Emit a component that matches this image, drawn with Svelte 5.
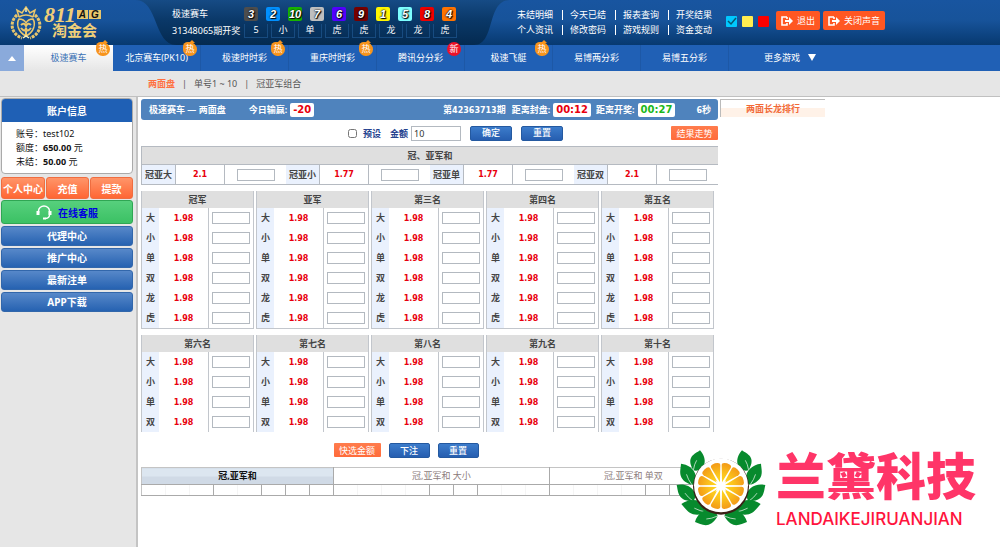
<script>
  const balls = [
    [3, '#4d4d4d'], [2, '#0090ff'], [10, '#18b400'], [7, '#bfbfbf'], [6, '#5200ff'],
    [9, '#760000'], [1, '#fff600'], [5, '#7dffff'], [8, '#f00000'], [4, '#ff7300']
  ];
  const results = ['5', '小', '单', '虎', '虎', '龙', '龙', '虎'];
  const links = [
    ['未结明细', '今天已结', '报表查询', '开奖结果'],
    ['个人资讯', '修改密码', '游戏规则', '资金变动']
  ];
  const games = [
    ['极速赛车', '热'], ['北京赛车(PK10)', '热'], ['极速时时彩', '热'], ['重庆时时彩', '热'],
    ['腾讯分分彩', '新'], ['极速飞艇', '热'], ['易博两分彩', ''], ['易博五分彩', '']
  ];
  const sums = [['冠亚大', '2.1'], ['冠亚小', '1.77'], ['冠亚单', '1.77'], ['冠亚双', '2.1']];
  const groups = [
    { names: ['冠军', '亚军', '第三名', '第四名', '第五名'], picks: ['大', '小', '单', '双', '龙', '虎'] },
    { names: ['第六名', '第七名', '第八名', '第九名', '第十名'], picks: ['大', '小', '单', '双'] }
  ];
  const menu = ['代理中心', '推广中心', '最新注单', 'APP下载'];
  const trendCells = Array.from({ length: 24 }, (_, i) => i + 1);
  const ruled = [3, 5, 6, 7, 8, 12, 13, 14, 17, 21, 22, 24];

  const leafEnds = [
    [104, 54, 84, 114, 22], [47, 94, 80, 158, 21], [34, 158, 84, 207, 21],
    [48, 215, 126, 240, 22], [89, 269, 157, 251, 22]
  ];
  const leaves = leafEnds.flatMap((e) => [e, [334 - e[0], e[1], 334 - e[2], e[3], -e[4]]]).map(([x, y, a, b, w]) => {
    const len = Math.hypot(a - x, b - y);
    const ux = (a - x) / len, uy = (b - y) / len;
    const at = (t, s) => `${(x + ux * len * t - uy * w * s).toFixed(1)} ${(y + uy * len * t + ux * w * s).toFixed(1)}`;
    return {
      body: `M${at(0, 0)}C${at(0.25, 0.5)} ${at(0.5, 1.6)} ${at(1, 0)}C${at(0.95, -1.5)} ${at(0.3, -1.6)} ${at(0, 0)}Z`,
      vein: `M${at(0.5, 0)}Q${at(0.7, 0.15)} ${at(1, 0)}`
    };
  });
  const slices = Array.from({ length: 12 }, (_, i) => i * 30);
  let preset = $state(false);
  let amount = $state('10');
</script>

<header>
  <a class="brand" href="#home" aria-label="811AG 淘金会">
    <svg width="32" height="34" viewBox="0 0 32 34" fill="none" stroke="#e9c66c" stroke-width="1.5">
      <path d="M9 11 7 4l5 3 4-6 4 6 5-3-2 7M9 11q7-4 14 0" />
      <path d="M7 9C-1 16 1 28 12 32M25 9c8 7 6 19-5 23" stroke-width="3" stroke-dasharray="3 1" />
      <path d="M9 13q5 0 7 4 2-4 7-4c3 5 1 13-7 17-8-4-10-12-7-17z" fill="#17539a" />
      <path d="M11 19q3-3 5 1 2-4 5-1M11 22q4 5 5 0 1 5 5 0M16 25v4" stroke-width="2" />
      <path d="m13 32 3-2 3 2M16 2v4" stroke="#fff3b6" />
    </svg>
    <span class="name"><span class="num"><b>811</b><i>A</i><i>G</i></span><strong>淘金会</strong></span>
  </a>
  <section class="draw">
    <svg class="curve" viewBox="0 0 360 45" preserveAspectRatio="none">
      <defs><linearGradient id="deep" x2="0" y2="1"><stop stop-color="#164b85" /><stop offset=".45" stop-color="#0a3868" /><stop offset="1" stop-color="#042a50" /></linearGradient></defs>
      <path d="M-4 0C18 0 14 45 36 45H334C356 45 346 0 370 0Z" fill="url(#deep)" />
    </svg>
    <div class="period"><span>极速赛车</span><span>31348065期开奖</span></div>
    <div class="outcome">
      <div class="balls">{#each balls as [n, c]}<b style:background={c}>{n}</b>{/each}</div>
      <div class="marks">{#each results as r}<span>{r}</span>{/each}</div>
    </div>
  </section>
  <div class="links">
    {#each links as row}<div>{#each row as l}<a href="#info">{l}</a>{/each}</div>{/each}
  </div>
  <div class="skins">
    <button class="cyan" aria-label="蓝色"><svg viewBox="0 0 11 11"><path d="m2 5 3 3 5-6" fill="none" stroke="#075775" stroke-width="1.5" /></svg></button>
    <button class="yellow" aria-label="黄色"></button>
    <button class="red" aria-label="红色"></button>
  </div>
  {#each ['退出', '关闭声音'] as t}
    <button class="exit"><svg width="12" height="10" viewBox="0 0 12 10"><path d="M6 1H1v8h5V7M6 1v2" fill="none" stroke="#fff" stroke-width="1.6" /><path d="M4 4h4V1l4 4-4 4V6H4z" fill="#fff" /></svg>{t}</button>
  {/each}
</header>

<nav class="games">
  <button class="fold" aria-label="收起"><svg width="8" height="5" viewBox="0 0 8 5"><path d="m0 5 4-5 4 5z" fill="#fff" /></svg></button>
  {#each games as [name, tag], i}
    <a href="#game" class:active={i === 0}>{name}{#if tag}<em class:fresh={tag === '新'}>{tag}</em>{/if}</a>
  {/each}
  <a href="#more" class="more">更多游戏<svg width="8" height="7" viewBox="0 0 8 7"><path d="M0 0h8L4 7z" fill="#fff" /></svg></a>
</nav>
<nav class="modes"><a class="on" href="#two">两面盘</a><span>|</span><a href="#single">单号1 ~ 10</a><span>|</span><a href="#group">冠亚军组合</a></nav>

<div class="page">
  <aside>
    <section class="account">
      <h2>账户信息</h2>
      <p>账号：<span>test102</span></p>
      <p>额度：<b>650.00</b> 元</p>
      <p>未结：<b>50.00</b> 元</p>
    </section>
    <div class="trio"><button>个人中心</button><button>充值</button><button>提款</button></div>
    <a class="service" href="#service">
      <svg width="16" height="15" viewBox="0 0 16 15" fill="none" stroke="#fff"><path d="M2.500 8V6a5.500 5 0 0 1 11 0v4q0 3-4 3.500" stroke-width="1.4" /><path d="M2 6v4M14 6v4" stroke-width="3" /><path d="M7 13.500h3" stroke-width="2" /></svg>
      在线客服
    </a>
    {#each menu as m}<button class="entry">{m}</button>{/each}
  </aside>

  <main>
    <div class="status">
      <span class="title">极速赛车 — 两面盘</span>
      <span class="tag">今日输赢:</span><output class="balance">-20</output>
      <span class="issue">第<small>42363713</small>期</span>
      <span class="tag">距离封盘:</span><output class="clock">00:12</output>
      <span class="tag">距离开奖:</span><output class="clock go">00:27</output>
      <span class="sec"><small>6</small>秒</span>
    </div>
    <form class="quick" onsubmit={(e) => e.preventDefault()}>
      <input id="preset" type="checkbox" bind:checked={preset} /><label for="preset">预设</label>
      <label for="amount">金额</label><input id="amount" type="text" bind:value={amount} />
      <button class="blue">确定</button><button class="blue" type="reset">重置</button>
      <button class="orange" type="button">结果走势</button>
    </form>

    <table class="sum">
      <thead><tr><th colspan="12">冠、亚军和</th></tr></thead>
      <tbody><tr>
        {#each sums as [n, o]}<th>{n}</th><td class="odds">{o}</td><td class="bet"><input type="text" aria-label={n} /></td>{/each}
      </tr></tbody>
    </table>

    {#each groups as g}
      <div class="group">
        {#each g.names as name}
          <table class:open={g.picks.length === 4}>
            <thead><tr><th colspan="3">{name}</th></tr></thead>
            <tbody>
              {#each g.picks as p}
                <tr><th>{p}</th><td class="odds">1.98</td><td class="bet"><input type="text" aria-label="{name}{p}" /></td></tr>
              {/each}
            </tbody>
          </table>
        {/each}
      </div>
    {/each}

    <div class="actions"><button class="orange">快选金额</button><button class="blue">下注</button><button class="blue">重置</button></div>

    <table class="trend">
      <thead><tr><th colspan="8" class="current">冠,亚军和</th><th colspan="9">冠,亚军和 大小</th><th colspan="7">冠,亚军和 单双</th></tr></thead>
      <tbody><tr>{#each trendCells as c}<td class:rule={ruled.includes(c)}></td>{/each}</tr></tbody>
    </table>
  </main>

  <section class="streak"><h2>两面长龙排行</h2></section>

  <div class="company">
    <svg width="90" height="80" viewBox="32 50 270 240">
      <defs><radialGradient id="juice" cx="167" cy="161" r="70" gradientUnits="userSpaceOnUse"><stop stop-color="#ffe11c" /><stop offset=".5" stop-color="#fcc51c" /><stop offset="1" stop-color="#f39a18" /></radialGradient></defs>
      {#each leaves as l}<path d={l.body} fill="#078a2d" /><path d={l.vein} fill="none" stroke="#fff" stroke-width="2" />{/each}
      <circle cx="167" cy="163" r="84" fill="#3b2117" />
      <circle cx="167" cy="159" r="81" fill="#fff" />
      {#each slices as a}<path d="M167 149 153 101Q151 94 159 92Q167 90 175 92Q183 94 181 101Z" fill="url(#juice)" transform="rotate({a + 15} 167 161)" />{/each}
      <path d="m167 138 4 14 12-8-6 12 15 5-15 5 6 13-12-8-4 15-4-15-13 8 7-13-16-5 16-5-7-12 13 8z" fill="#fff" />
    </svg>
    <div><strong>兰黛科技</strong><span>LANDAIKEJIRUANJIAN</span></div>
  </div>
</div>

<style>
  :global(body) { margin: 0; background: #fff; font-family: "Noto Sans", "Noto Sans CJK SC", sans-serif; font-size: 9px; color: #333; }
  :global(#app) { display: flex; flex-direction: column; min-height: 100vh; }
  a { color: inherit; text-decoration: none; }
  button, input { box-sizing: border-box; font-family: inherit; font-size: 9px; margin: 0; padding: 0; }
  button { border: 0; color: #fff; cursor: pointer; }
  h2, p { margin: 0; }
  svg { flex: none; }

  header { display: flex; align-items: center; height: 45px; color: #fff; background: linear-gradient(#1855a0, #17539a 45%, #073970); }
  .brand { display: flex; align-items: center; gap: 2px; width: 130px; padding-left: 10px; height: 45px; }
  .name { display: flex; flex-direction: column; line-height: 15px; color: #f0cf78; }
  .num { display: flex; align-items: center; }
  .num b { font: italic bold 22px/15px "Liberation Serif", serif; }
  .num i { margin-left: 1px; padding: 0 2px; background: #e9c66c; color: #111; font: italic bold 10px/9px "Liberation Sans", sans-serif; }
  .name strong { padding-left: 8px; font-size: 15px; line-height: 16px; }
  .draw { position: relative; align-self: flex-start; align-items: center; display: flex; gap: 3px; width: 328px; height: 37px; padding: 4px 0 0 32px; }
  .curve { position: absolute; left: 0; top: 0; width: 360px; height: 45px; overflow: visible; }
  .period, .outcome { position: relative; display: flex; flex-direction: column; gap: 3px; }
  .period { width: 69px; line-height: 14px; white-space: nowrap; }
  .balls { display: flex; gap: 8px; }
  .balls b { width: 14px; height: 14px; border-radius: 2px; text-align: center; font: italic bold 11px/14px "Liberation Sans", sans-serif; color: #fff; text-shadow: 0 0 1px #000, 0 0 2px #000, 1px 1px 1px #000; }
  .marks { display: flex; gap: 3px; }
  .marks span { box-sizing: border-box; width: 24px; height: 14px; border: 1px solid #174b80; border-top: 0; text-align: center; line-height: 12px; }
  .links { position: relative; display: grid; gap: 1px; padding-left: 9px; width: 217px; }
  .links div { display: flex; line-height: 14px; }
  .links a { width: 53px; padding-left: 8px; box-sizing: border-box; background: linear-gradient(#fff, #fff) 0 2px / 1px 10px no-repeat; }
  .links a:first-child { background: none; }
  .skins { display: flex; gap: 5px; margin: 0 7px 2px 0; }
  .skins button { width: 11px; height: 11px; border-radius: 1px; }
  .skins svg { display: block; }
  .cyan { background: #00c8ff; } .yellow { background: #ffed50; } .red { background: #fb0000; }
  .exit { display: flex; align-items: center; gap: 4px; height: 19px; padding: 0 5px; margin: 0 3px 4px 0; border-radius: 2px; background: #ff5722; }

  .games { display: flex; height: 26px; background: #2060b5; color: #fff; }
  .fold { width: 24px; background: #8aaadb; display: flex; align-items: center; justify-content: center; }
  .games a { position: relative; box-sizing: border-box; flex: 0 1 88px; border-right: 1px solid #1d58a6; text-align: center; line-height: 26px; white-space: nowrap; }
  .games a.active { flex-basis: 89px; border: 0; background: linear-gradient(#fff, #e6e6e6); color: #3971b5; }
  .games .more { flex-basis: 122px; border: 0; }
  .more svg { margin-left: 8px; }
  em { position: absolute; right: 3px; top: -3px; width: 14px; height: 14px; border-radius: 5px 8px 7px 7px; background: #f7941d; font-style: normal; line-height: 14px; color: #fff; z-index: 1; }
  em::before { content: ""; position: absolute; left: 6px; top: -2px; border: 3px solid transparent; border-top: 0; border-bottom-color: #f7941d; }
  em.fresh { background: #ec1228; border-radius: 50%; }
  em.fresh::before { display: none; }
  .modes { display: flex; gap: 7px; height: 25px; padding-left: 148px; line-height: 25px; background: #e6e6e6; border-bottom: 1px solid #c0c0c0; color: #555; }
  .modes .on { color: #ff7040; font-weight: bold; }

  .page { position: relative; flex: 1; display: grid; grid-template-columns: 138px minmax(0, 1fr) 280px; }
  aside { box-sizing: border-box; display: flex; flex-direction: column; gap: 2px; padding: 1px 3px 0 1px; background: #e6e6e6; border-right: 2px solid #c4c4c4; }
  aside button, .service { border-radius: 3px; font-size: 10px; font-weight: bold; }
  .account { height: 76px; box-sizing: border-box; border: 1px solid #aaa; border-radius: 4px; background: #fff; color: #111; overflow: hidden; }
  .account h2 { height: 23px; margin-bottom: 5px; background: #1f60b5; color: #fff; text-align: center; font-size: 10px; line-height: 24px; }
  .account p { padding-left: 14px; line-height: 14px; }
  .trio { display: grid; grid-template-columns: 44px 1fr 1fr; gap: 1px; height: 22px; margin-top: 1px; }
  .trio button { border: 1px solid #ef6d40; background: linear-gradient(#ff9569, #ff6634); white-space: nowrap; }
  .service { display: flex; align-items: center; justify-content: center; gap: 6px; height: 22px; border: 1px solid #2fa653; background: linear-gradient(#57d07d, #3bc164); color: #0000e0; margin-top: -1px; }
  .entry { height: 20px; border: 1px solid #3267ab; background: linear-gradient(#5788c9, #2662b1); line-height: 18px; }

  main { padding: 2px 2px 0 3px; }
  .status { display: flex; align-items: center; height: 21px; padding: 0 7px 0 8px; border-radius: 3px; background: #4f83bd; color: #fff; font-weight: bold; white-space: nowrap; }
  small { font: bold 8px "DejaVu Sans", sans-serif; }
  .title { margin-right: 23px; }
  .tag { margin-right: 3px; }
  output { padding: 0 3px; border-radius: 2px; background: #fff; color: #e8000d; font: bold 10px/14px "DejaVu Sans", sans-serif; }
  .issue { margin-left: auto; margin-right: 6px; }
  .clock { margin-right: 5px; }
  .go { color: #1cb81c; }
  .sec { margin-left: 16px; }
  .quick { display: flex; align-items: center; height: 26px; padding-left: 207px; color: #26438f; font-weight: bold; }
  .quick label { margin-right: 3px; }
  #preset { width: 9px; height: 9px; margin-right: 6px; }
  label[for="preset"] { padding-right: 6px; }
  input[type="text"] { border: 1px solid #b3b9c0; background: #fff; }
  #amount { width: 50px; height: 15px; padding-left: 2px; margin-right: 9px; color: #333; }
  .blue { width: 42px; height: 15px; border: 1px solid #2459a0; border-radius: 2px; background: linear-gradient(#3c7ccb, #265eb0); line-height: 12px; font-weight: 500; }
  .quick .blue + .blue { margin-left: 9px; }
  .orange { width: 47px; height: 14px; border-radius: 1px; background: linear-gradient(#ff7c4d, #ff6b3a); line-height: 13px; }
  .quick .orange { margin-left: auto; }

  table { border-collapse: collapse; table-layout: fixed; width: 100%; }
  th, td { padding: 0; font-size: 9px; line-height: 12px; text-align: center; }
  .sum th, .group th { color: #444; font-weight: bold; }
  .sum thead th, .group thead th { height: 17px; width: auto; background: #dfdfdf; }
  .sum { border: 1px solid #b5bac1; border-right: 0; table-layout: auto; }
  .sum tbody th { width: 33px; height: 19px; background: #eaf1fd; border-right: 1px solid #b5bac1; border-top: 1px solid #b5bac1; }
  .sum td { border-top: 1px solid #b5bac1; }
  .sum .odds { width: 48px; border-right: 1px solid #b5bac1; }
  .bet input { display: block; width: 38px; height: 12px; margin: 0 auto; }
  .odds { color: #e8000d; font: bold 8px/12px "DejaVu Sans", sans-serif; }
  .group { display: grid; grid-template-columns: repeat(5, 1fr); gap: 2px; margin: 6px 4px 0 0; }
  .group table { border: 1px solid #c2c6cc; border-top: 0; table-layout: auto; }
  .group table.open { border-bottom: 0; }
  .group tbody th { width: 17px; height: 20px; background: #eaf1fd; }
  .group tbody .odds { width: 49px; padding-top: 2px; border-right: 1px solid #c2c6cc; }
  .actions { display: flex; justify-content: center; gap: 8px; padding: 11px 0 9px; margin-right: 47px; }
  .actions .blue { width: 41px; }
  .trend { border: 1px solid #c4c4c4; }
  .trend th { height: 16px; border-right: 1px solid #aaa; border-bottom: 1px solid #aaa; font-weight: normal; color: #8b7b7b; }
  .trend .current { background: linear-gradient(#dce6f0 50%, #d0dae6 50%); color: #111; font-weight: bold; }
  .trend td { height: 10px; border-right: 1px solid #f5f5f5; border-bottom: 1px solid #aaa; }
  .trend td.rule { border-right-color: #aaa; }

  .streak { padding-top: 2px; }
  .streak h2 { width: 104px; height: 17px; border-top: 1px solid #bbb; border-left: 1px solid #bbb; background: linear-gradient(#fff 50%, #fff2e8 50%); color: #f26a38; text-align: center; font-size: 9px; line-height: 17px; }
  .company { position: absolute; right: 24px; bottom: 18px; display: flex; align-items: flex-start; gap: 10px; }
  .company div { display: flex; flex-direction: column; gap: 6px; }
  .company strong { color: #ff3568; font-size: 50px; line-height: 54px; font-weight: 900; }
  .company span { color: #ff143d; font: 500 17px/20px Inter, sans-serif; }
</style>
